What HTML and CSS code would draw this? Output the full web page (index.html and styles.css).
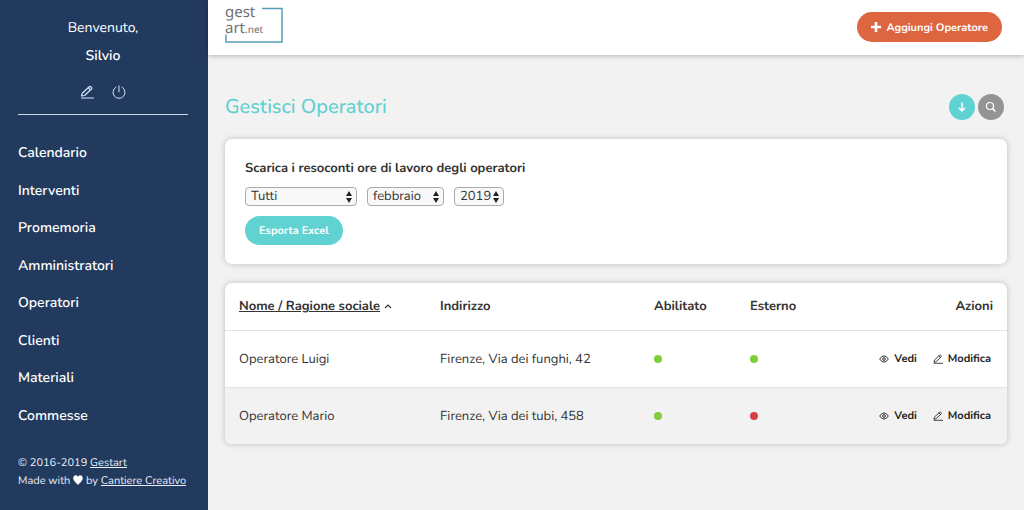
FILE: index.html
```
<!DOCTYPE html>
<html lang="it">
<head>
<meta charset="utf-8">
<meta name="viewport" content="width=device-width, initial-scale=1">
<title>Gestisci Operatori</title>
<link rel="stylesheet" href="styles.css">
</head>
<body>
<svg class="sprite" aria-hidden="true">
  <symbol id="pencil" viewBox="0 0 14 14"><path d="M1.500 11 2.300 8.200 9.200 1.700Q10 1.100 10.800 1.800L11.500 2.500Q12.200 3.200 11.500 4L4.600 10.500ZM8.200 2.700 10.500 5M1.500 13H13.500" fill="none" stroke="currentColor" stroke-width="1.200" stroke-linejoin="round" stroke-linecap="round"/></symbol>
  <symbol id="power" viewBox="0 0 14 14"><path d="M7 .8V6.800M4 2.100A6 6 0 1 0 10 2.100" fill="none" stroke="currentColor" stroke-linecap="round"/></symbol>
  <symbol id="eye" viewBox="0 0 12 10"><path d="M.8 5Q3 1.300 6 1.300T11.200 5Q9 8.700 6 8.700T.8 5Z" fill="none" stroke="currentColor" stroke-width="1.100"/><circle cx="6" cy="5" r="1.600" fill="none" stroke="currentColor" stroke-width="1.100"/></symbol>
</svg>
<div class="app">
  <aside class="sidebar">
    <div class="welcome">
      <p class="greeting">Benvenuto,</p>
      <p class="user">Silvio</p>
      <div class="user-actions">
        <a href="#" aria-label="Modifica profilo"><svg class="icon-md"><use href="#pencil"/></svg></a>
        <a href="#" aria-label="Esci"><svg class="icon-md"><use href="#power"/></svg></a>
      </div>
    </div>
    <nav class="menu">
      <a href="#">Calendario</a>
      <a href="#">Interventi</a>
      <a href="#">Promemoria</a>
      <a href="#">Amministratori</a>
      <a href="#">Operatori</a>
      <a href="#">Clienti</a>
      <a href="#">Materiali</a>
      <a href="#">Commesse</a>
    </nav>
    <footer class="credits">
      <p>© 2016-2019 <a href="#">Gestart</a></p>
      <p>Made with <svg class="heart" viewBox="0 0 10 10" role="img" aria-label="amore"><path d="M5 10C3.5 8 .3 6 .3 3.2.3 1.400 1.300.3 2.700.3 3.800.3 4.600.9 5 1.800 5.400.9 6.200.3 7.300.3 8.700.3 9.700 1.400 9.700 3.200 9.700 6 6.500 8 5 10Z" fill="currentColor"/></svg> by <a href="#">Cantiere Creativo</a></p>
    </footer>
  </aside>
  <div class="content">
    <header class="topbar">
      <a class="logo" href="#" aria-label="gestart.net">
        <span class="logo-line">gest</span>
        <span class="logo-line">art<small>.net</small></span>
        <svg class="logo-frame" viewBox="0 0 58 40" width="58" height="40"><path d="M37 4.500H57V38H1V30.500" fill="none" stroke="#559fb9" stroke-width="1.500"/></svg>
      </a>
      <button class="btn btn-add" type="button"><svg viewBox="0 0 10 10" width="10" height="10"><path d="M5 0V10M0 5H10" stroke="currentColor" stroke-width="2.600"/></svg>Aggiungi Operatore</button>
    </header>
    <main class="page">
      <div class="page-head">
        <h1>Gestisci Operatori</h1>
        <div class="tools">
          <button class="round round-teal" type="button" aria-label="Scarica"><svg viewBox="0 0 12 12" width="12" height="12"><path d="M6 1.500V10M2.800 6.800 6 10 9.200 6.800" fill="none" stroke="currentColor" stroke-width="1.500"/></svg></button>
          <button class="round round-grey" type="button" aria-label="Cerca"><svg viewBox="0 0 12 12" width="12" height="12"><circle cx="5" cy="5" r="3.500" fill="none" stroke="currentColor" stroke-width="1.200"/><path d="M7.600 7.600 10.500 10.500" stroke="currentColor" stroke-width="1.500"/></svg></button>
        </div>
      </div>
      <form class="card export">
        <h2>Scarica i resoconti ore di lavoro degli operatori</h2>
        <div class="filters">
          <select class="sel-operator" aria-label="Operatore"><option>Tutti</option></select>
          <select class="sel-month" aria-label="Mese"><option>febbraio</option></select>
          <select class="sel-year" aria-label="Anno"><option>2019</option></select>
        </div>
        <button class="btn btn-export" type="button">Esporta Excel</button>
      </form>
      <div class="card">
        <table>
          <thead>
            <tr><th class="col-name"><a href="#">Nome / Ragione sociale</a> <svg viewBox="0 0 8 6" width="8" height="8"><path d="M1 5 4 2 7 5" fill="none" stroke="currentColor" stroke-width="1.200"/></svg></th><th class="col-address">Indirizzo</th><th class="col-flag">Abilitato</th><th class="col-flag">Esterno</th><th class="col-actions">Azioni</th></tr>
          </thead>
          <tbody>
            <tr>
              <td>Operatore Luigi</td><td>Firenze, Via dei funghi, 42</td>
              <td><span class="dot on" role="img" aria-label="Sì"></span></td><td><span class="dot on" role="img" aria-label="Sì"></span></td>
              <td><div class="actions"><a href="#"><svg class="icon-sm"><use href="#eye"/></svg>Vedi</a><a href="#"><svg class="icon-sm"><use href="#pencil"/></svg>Modifica</a></div></td>
            </tr>
            <tr>
              <td>Operatore Mario</td><td>Firenze, Via dei tubi, 458</td>
              <td><span class="dot on" role="img" aria-label="Sì"></span></td><td><span class="dot off" role="img" aria-label="No"></span></td>
              <td><div class="actions"><a href="#"><svg class="icon-sm"><use href="#eye"/></svg>Vedi</a><a href="#"><svg class="icon-sm"><use href="#pencil"/></svg>Modifica</a></div></td>
            </tr>
          </tbody>
        </table>
      </div>
    </main>
  </div>
</div>
</body>
</html>
```
FILE: styles.css
```
* { box-sizing: border-box; }
body {
  margin: 0;
  font-family: Nunito, Lato, "Open Sans", sans-serif;
  font-size: 13px;
  text-rendering: geometricPrecision;
  color: #333;
  background: #f2f2f2;
}
p, h1, h2 { margin: 0; }
a { color: inherit; }
button, select { font-family: inherit; text-rendering: inherit; }
.sprite { position: absolute; width: 0; height: 0; }
.app { display: flex; min-height: 100vh; }

.sidebar {
  flex: 0 0 208px;
  display: flex;
  flex-direction: column;
  padding: 14px 20px 20px 18px;
  background: #223a5e;
  color: #fff;
}
.welcome {
  padding-bottom: 15px;
  border-bottom: 1px solid #cfd8e6;
  text-align: center;
  font-size: 14px;
  line-height: 28px;
}
.user { font-weight: 600; }
.user-actions { display: flex; justify-content: center; gap: 18px; padding-top: 15px; color: #d6e4f7; }
.user-actions a { display: flex; }
.icon-md { width: 14px; height: 14px; }
.menu { flex: 1; display: flex; flex-direction: column; margin: 19px 0 20px; }
.menu a {
  flex: 1;
  display: flex;
  align-items: center;
  font-size: 14px;
  font-weight: 600;
  text-decoration: none;
}
.credits { font-size: 11px; line-height: 18px; color: #e9f0fa; white-space: nowrap; }
.heart { width: 10px; height: 10px; color: #fff; vertical-align: -1px; }

.content { flex: 1; min-width: 0; }
.topbar {
  display: flex;
  justify-content: space-between;
  align-items: flex-start;
  padding: 4px 22px 11px 17px;
  background: #fff;
  box-shadow: 0 1px 5px rgba(0, 0, 0, .25);
}
.logo {
  position: relative;
  display: flex;
  flex-direction: column;
  width: 58px;
  height: 40px;
  color: #707173;
  font-family: "Noto Sans", "Open Sans", sans-serif;
  font-size: 15px;
  line-height: 16px;
  text-decoration: none;
}
.logo small { font-size: 10px; }
.logo-frame { position: absolute; inset: 0; }
.btn {
  border: 0;
  border-radius: 16px;
  color: #fff;
  font-size: 11px;
  font-weight: 700;
}
.btn-add {
  display: flex;
  align-items: center;
  gap: 5px;
  height: 30px;
  margin-top: 8px;
  padding: 0 14px;
  background: #dd6540;
}
.page { padding: 39px 17px 20px; }
.page-head { display: flex; justify-content: space-between; align-items: flex-end; padding-right: 3px; }
h1 { font-size: 20px; line-height: 24px; font-weight: 500; color: #5fd0cf; }
.tools { display: flex; gap: 3px; }
.round {
  display: flex;
  align-items: center;
  justify-content: center;
  width: 26px;
  height: 26px;
  padding: 0;
  border: 0;
  border-radius: 50%;
  color: #fff;
}
.round-teal { background: #60d2d2; }
.round-grey { background: #949494; }
.card {
  margin-top: 19px;
  border-radius: 7px;
  background: #fff;
  box-shadow: 0 0 6px rgba(0, 0, 0, .22);
  overflow: hidden;
}
.export { padding: 19px 20px; }
h2 { font-size: 13px; line-height: 20px; font-weight: 700; }
.filters { display: flex; gap: 10px; padding: 9px 0 10px; }
select {
  appearance: none;
  height: 19px;
  padding: 0 5px;
  border: 1px solid #aaa;
  border-radius: 4px;
  font-size: 13px;
  line-height: 17px;
  color: #333;
  background: #f8f8f8 url("data:image/svg+xml,%3Csvg xmlns='http://www.w3.org/2000/svg' width='6' height='12' viewBox='0 0 6 12'%3E%3Cpath d='M0 5 3 0 6 5ZM0 7H6L3 12Z' fill='%23222'/%3E%3C/svg%3E") no-repeat right 4px center;
}
.sel-operator { width: 112px; }
.sel-month { width: 77px; }
.sel-year { width: 50px; }
.btn-export { height: 29px; padding: 0 14px; background: #60d2d2; }

table { width: 100%; table-layout: fixed; border-collapse: collapse; }
th, td { padding: 0 14px; text-align: left; white-space: nowrap; }
th { height: 47px; font-weight: 700; }
td { height: 57px; border-top: 1px solid #e2e2e2; }
tbody tr:nth-child(even) { background: #f2f2f2; }
.col-name { width: 201px; }
.col-address { width: 214px; }
.col-flag { width: 96px; }
th.col-actions { text-align: right; }
.dot { display: inline-block; width: 8px; height: 8px; border-radius: 50%; }
.on { background: #82cc3c; }
.off { background: #d0414a; }
.actions { display: flex; justify-content: flex-end; gap: 16px; padding-right: 2px; font-size: 11px; font-weight: 700; color: #222; }
.actions a { display: flex; align-items: center; gap: 5px; text-decoration: none; }
.icon-sm { width: 10px; height: 10px; }
```
